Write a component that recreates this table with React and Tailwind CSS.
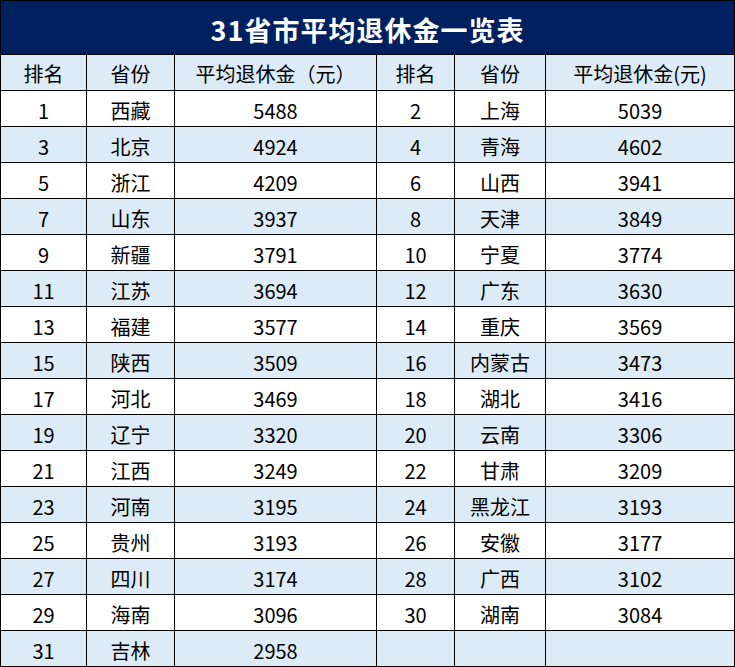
const rows = [
  ["1", "西藏", "5488", "2", "上海", "5039"],
  ["3", "北京", "4924", "4", "青海", "4602"],
  ["5", "浙江", "4209", "6", "山西", "3941"],
  ["7", "山东", "3937", "8", "天津", "3849"],
  ["9", "新疆", "3791", "10", "宁夏", "3774"],
  ["11", "江苏", "3694", "12", "广东", "3630"],
  ["13", "福建", "3577", "14", "重庆", "3569"],
  ["15", "陕西", "3509", "16", "内蒙古", "3473"],
  ["17", "河北", "3469", "18", "湖北", "3416"],
  ["19", "辽宁", "3320", "20", "云南", "3306"],
  ["21", "江西", "3249", "22", "甘肃", "3209"],
  ["23", "河南", "3195", "24", "黑龙江", "3193"],
  ["25", "贵州", "3193", "26", "安徽", "3177"],
  ["27", "四川", "3174", "28", "广西", "3102"],
  ["29", "海南", "3096", "30", "湖南", "3084"],
  ["31", "吉林", "2958", "", "", ""],
];

const font = { fontFamily: '"Noto Sans CJK SC", "Noto Sans", sans-serif' };

export default function App() {
  return (
    <div className="w-[735px] h-[667px] bg-white overflow-hidden" style={font}>
      <table className="w-[734px] table-fixed border-collapse text-black text-[20px] leading-none">
        <colgroup>
          <col className="w-[86px]" />
          <col className="w-[88px]" />
          <col className="w-[202px]" />
          <col className="w-[78px]" />
          <col className="w-[91px]" />
          <col className="w-[189px]" />
        </colgroup>
        <thead>
          <tr className="h-[54px] bg-[#002060]">
            <th colSpan={6} className="border border-black text-white text-[27px] font-bold tracking-[1px] pt-1">
              31省市平均退休金一览表
            </th>
          </tr>
          <tr className="h-[36px] bg-[#ddebf7]">
            <th className="border border-black font-normal pt-0.5">排名</th>
            <th className="border border-black font-normal pt-0.5">省份</th>
            <th className="border border-black font-normal pt-0.5">平均退休金（元）</th>
            <th className="border border-black font-normal pt-0.5">排名</th>
            <th className="border border-black font-normal pt-0.5">省份</th>
            <th className="border border-black font-normal pt-0.5">平均退休金(元)</th>
          </tr>
        </thead>
        <tbody>
          {rows.map((r, i) => (
            <tr key={i} className={i % 2 === 1 ? "h-[36px] bg-[#ddebf7]" : "h-[36px] bg-white"}>
              {r.map((c, j) => (
                <td key={j} className="border border-black text-center pt-1">
                  {c}
                </td>
              ))}
            </tr>
          ))}
        </tbody>
      </table>
    </div>
  );
}
